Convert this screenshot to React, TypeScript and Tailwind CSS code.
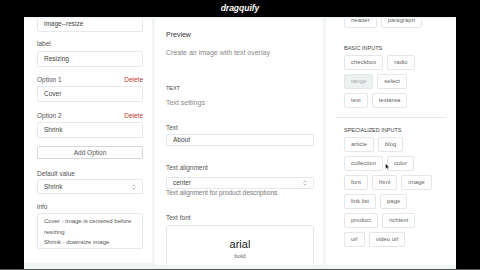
import React from "react";

const basicRows = [["checkbox", "radio"], ["range", "select"], ["text", "textarea"]];
const specialRows = [
  ["article", "blog"],
  ["collection", "color"],
  ["font", "html", "image"],
  ["link list", "page"],
  ["product", "richtext"],
  ["url", "video url"],
];

function SelectArrows() {
  return (
    <svg width="4" height="6" viewBox="0 0 4 6" className="text-[#999]">
      <path d="M0.6 2.3 L2 0.8 L3.4 2.3" fill="none" stroke="currentColor" strokeWidth="0.7" />
      <path d="M0.6 3.7 L2 5.2 L3.4 3.7" fill="none" stroke="currentColor" strokeWidth="0.7" />
    </svg>
  );
}

function Field({ value, className = "" }: { value: string; className?: string }) {
  return (
    <div className={`flex h-[16px] items-center rounded-[2px] border border-[#e6e9e9] px-[6px] text-[6.5px] text-[#444] ${className}`}>
      {value}
    </div>
  );
}

function Label({ children, className = "" }: { children: React.ReactNode; className?: string }) {
  return <div className={`h-[10px] text-[6.5px] leading-[10px] text-[#555] ${className}`}>{children}</div>;
}

function Chip({ name }: { name: string }) {
  const disabled = name === "range";
  return (
    <div
      className={`flex h-[15px] items-center rounded-[2px] border border-[#e4e7e7] px-[6px] text-[6px] ${
        disabled ? "bg-[#eef1f1] text-[#aaa]" : "bg-white text-[#666]"
      }`}
    >
      {name}
    </div>
  );
}

function LeftPanel() {
  return (
    <div className="h-[244px] w-[128px] overflow-hidden rounded-[3px] bg-white pl-[13px] pr-[9px]">
      <Field value="image--resize" className="-mt-[3px]" />
      <Label className="mt-[7px]">label</Label>
      <Field value="Resizing" className="mt-[2px]" />
      <div className="mt-[8px] flex h-[10px] items-center justify-between text-[6.5px] text-[#555]">
        <span>Option 1</span>
        <span className="text-[#c0392b]">Delete</span>
      </div>
      <Field value="Cover" className="mt-[1px]" />
      <div className="mt-[9px] flex h-[10px] items-center justify-between text-[6.5px] text-[#555]">
        <span>Option 2</span>
        <span className="text-[#c0392b]">Delete</span>
      </div>
      <Field value="Shrink" className="mt-[1px]" />
      <div className="mt-[8px] flex h-[13px] items-center justify-center rounded-[2px] border border-[#d4d8d8] text-[6.5px] text-[#555]">
        Add Option
      </div>
      <Label className="mt-[10px]">Default value</Label>
      <div className="flex h-[15px] items-center justify-between rounded-[2px] border border-[#e6e9e9] px-[6px] text-[6.5px] text-[#444]">
        <span>Shrink</span>
        <SelectArrows />
      </div>
      <Label className="mt-[8px]">info</Label>
      <div className="mt-[1px] h-[36px] rounded-[2px] border border-[#e6e9e9] px-[6px] pt-[2px] text-[6px] leading-[10.5px] text-[#555]">
        <div>Cover - image is centered before</div>
        <div>resizing</div>
        <div>Shrink - downsize image</div>
      </div>
    </div>
  );
}

function MiddlePanel() {
  return (
    <div className="flex h-[246px] w-[168px] flex-col overflow-hidden rounded-[3px] bg-white pl-[11px] pr-[9px] pt-[11px]">
      <div className="h-[10px] text-[7px] leading-[10px] text-[#333]">Preview</div>
      <div className="mt-[8px] h-[10px] text-[7px] leading-[10px] text-[#888]">Create an image with text overlay</div>
      <div className="mt-[21px] h-px bg-[#e6e9e9]" />
      <div className="mt-[4px] h-[10px] text-[5.5px] uppercase leading-[10px] text-[#444]">Text</div>
      <div className="mt-[5px] h-[10px] text-[7px] leading-[10px] text-[#888]">Text settings</div>
      <Label className="mt-[15px]">Text</Label>
      <Field value="About" className="mt-[1px]" />
      <Label className="mt-[17px]">Text alignment</Label>
      <div className="mt-[4px] flex h-[13px] items-center justify-between rounded-[2px] border border-[#e6e9e9] px-[6px] text-[6.5px] text-[#444]">
        <span>center</span>
        <SelectArrows />
      </div>
      <div className="h-[8px] text-[6.5px] leading-[8px] text-[#777]">Text alignment for product descriptions</div>
      <Label className="mt-[16px]">Text font</Label>
      <div className="mt-[2px] flex h-[50px] shrink-0 flex-col items-center rounded-[3px] border border-[#e6e9e9] pt-[11px]">
        <div className="text-[11px] leading-[14px] text-[#222]">arial</div>
        <div className="text-[6px] leading-[10px] text-[#666]">bold</div>
      </div>
    </div>
  );
}

function RightPanel() {
  return (
    <div className="relative h-[246px] w-[130px] overflow-hidden rounded-[3px] bg-white px-[10px]">
      <div className="-mt-[6px] flex gap-[4px] pl-[8px]">
        <Chip name="header" />
        <Chip name="paragraph" />
      </div>
      <div className="mt-[16px] h-[8px] pl-[8px] text-[5.5px] uppercase leading-[8px] text-[#444]">Basic inputs</div>
      <div className="mt-[3px] flex flex-col gap-[4px] pl-[8px]">
        {basicRows.map((row) => (
          <div key={row.join()} className="flex gap-[4px]">
            {row.map((n) => (
              <Chip key={n} name={n} />
            ))}
          </div>
        ))}
      </div>
      <div className="mt-[9px] h-px bg-[#e6e9e9]" />
      <div className="mt-[8px] h-[8px] pl-[8px] text-[5.5px] uppercase leading-[8px] text-[#444]">Specialized inputs</div>
      <div className="mt-[3px] flex flex-col gap-[4px] pl-[8px]">
        {specialRows.map((row) => (
          <div key={row.join()} className="flex gap-[4px]">
            {row.map((n) => (
              <Chip key={n} name={n} />
            ))}
          </div>
        ))}
      </div>
      {/* mouse pointer */}
      <svg width="5" height="7" viewBox="0 0 5 7" className="absolute left-[59px] top-[144px]">
        <path d="M0.5 0.5 L0.5 6 L1.8 4.7 L2.8 6.6 L3.5 6.2 L2.6 4.4 L4.4 4.4 Z" fill="#111" stroke="#fff" strokeWidth="0.4" />
      </svg>
    </div>
  );
}

export default function App() {
  return (
    <div className="flex h-[270px] w-[480px] flex-col overflow-hidden bg-black font-['Liberation_Sans',Arial,sans-serif]">
      <div className="flex h-[17px] shrink-0 items-center justify-center text-[8.5px] font-bold italic text-white">
        dragquify
      </div>
      <div className="ml-[24px] flex h-[252px] w-[432px] gap-[3px] bg-[#f2f5f5] pt-[2px]">
        <LeftPanel />
        <MiddlePanel />
        <RightPanel />
      </div>
      <div className="h-px bg-[#555]" />
    </div>
  );
}
